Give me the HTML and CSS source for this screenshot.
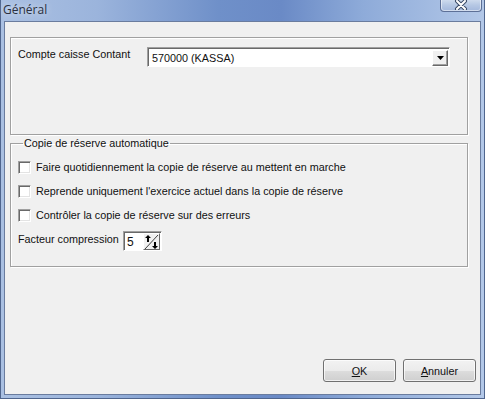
FILE: index.html
```html
<!DOCTYPE html>
<html lang="fr">
<head>
    <meta charset="UTF-8">
    <meta name="viewport" content="width=device-width, initial-scale=1.0">
    <title>Général</title>
    <link rel="stylesheet" href="styles.css">
</head>
<body>
    <section class="window">
        <header class="titlebar">
            <span class="titlebar__title">Général</span>
            <button class="titlebar__close" type="button" aria-label="Fermer">
                <svg width="14" height="10" viewBox="0 0 14 10">
                    <path d="M3 1 L11 9 M11 1 L3 9" stroke="#3a4a66" stroke-width="4" stroke-linecap="round"/>
                    <path d="M3 1 L11 9 M11 1 L3 9" stroke="#fff" stroke-width="2" stroke-linecap="round"/>
                </svg>
            </button>
        </header>

        <main class="client">
            <div class="panel">
                <div class="field">
                    <label class="field__label">Compte caisse Contant</label>
                    <div class="combo">
                        <span class="combo__value">570000 (KASSA)</span>
                        <span class="combo__button">
                            <svg width="7" height="4" viewBox="0 0 7 4"><path d="M0 0 H7 L3.5 4 Z" fill="#000"/></svg>
                        </span>
                    </div>
                </div>
            </div>

            <fieldset class="group">
                <legend class="group__legend">Copie de réserve automatique</legend>
                <label class="check"><span class="check__box"></span>Faire quotidiennement la copie de réserve au mettent en marche</label>
                <label class="check"><span class="check__box"></span>Reprende uniquement l'exercice actuel dans la copie de réserve</label>
                <label class="check"><span class="check__box"></span>Contrôler la copie de réserve sur des erreurs</label>
                <div class="compression">
                    <span class="compression__label">Facteur compression</span>
                    <div class="spin">
                        <span class="spin__value">5</span>
                        <span class="spin__button">
                            <svg width="15" height="16" viewBox="0 0 15 16">
                                <path d="M14 1 L1 15" stroke="#404040" stroke-width="1"/>
                                <path d="M4 1 L1 4 H3 V8 H5 V4 H7 Z" fill="#000"/>
                                <path d="M11 15 L8 12 H10 V8 H12 V12 H14 Z" fill="#000"/>
                            </svg>
                        </span>
                    </div>
                </div>
            </fieldset>

            <footer class="actions">
                <button class="btn" type="button"><u>O</u>K</button>
                <button class="btn" type="button"><u>A</u>nnuler</button>
            </footer>
        </main>
    </section>
</body>
</html>
```

FILE: styles.css
```css
* {
    margin: 0;
    padding: 0;
    box-sizing: border-box;
}

body {
    background-color: #f0f0f0;
    font-family: 'Liberation Sans', Arial, sans-serif;
    font-size: 10.8px;
    color: #111;
}

.window {
    width: 485px;
    height: 399px;
    display: flex;
    flex-direction: column;
    background: linear-gradient(to right, #aac0e2 0%, #9bb4dc 20%, #6f90c9 45%, #6a8ac6 58%, #8eabd9 75%, #b3c8e8 100%);
    padding: 0 3px 3px 3px;
    border-left: 1px solid #50668e;
    border-right: 1px solid #50668e;
    border-bottom: 1px solid #50668e;
}

.titlebar {
    height: 21px;
    display: flex;
    align-items: flex-start;
    justify-content: space-between;
}

.titlebar__title {
    font-family: 'Open Sans', sans-serif;
    font-size: 12px;
    color: #2a3040;
    padding-top: 1px;
    margin-left: -1px;
    text-shadow: 0 0 6px rgba(255, 255, 255, 0.7);
}

.titlebar__close {
    width: 42px;
    height: 13px;
    margin-top: -1px;
    margin-right: -1px;
    border: 1px solid #5d7097;
    border-top: none;
    border-radius: 0 0 4px 4px;
    background: linear-gradient(#d2deef, #b6c8e4 50%, #a3b8dc);
    box-shadow: inset 0 0 0 1px rgba(255, 255, 255, 0.5);
    display: flex;
    align-items: center;
    justify-content: center;
}

.client {
    flex: 1;
    display: flex;
    flex-direction: column;
    background-color: #f0f0f0;
    border: 1px solid #6a7c9e;
    padding: 15px 4px 12px 5px;
}

.panel {
    height: 98px;
    margin-right: 8px;
    border: 1px solid #a0a0a0;
    box-shadow: 1px 1px 0 #fff, inset 1px 1px 0 #fff;
    padding: 9px 17px 0 7px;
}

.field {
    display: flex;
    align-items: flex-start;
}

.field__label {
    width: 129px;
    padding-top: 1px;
}

.combo {
    flex: 1;
    height: 20px;
    display: flex;
    align-items: center;
    justify-content: space-between;
    background-color: #fff;
    border-top: 1px solid #a0a0a0;
    border-left: 1px solid #a0a0a0;
    border-right: 1px solid #fff;
    border-bottom: 1px solid #fff;
    box-shadow: inset 1px 1px 0 #696969;
    padding: 2px 1px 1px 4px;
}

.combo__button {
    width: 16px;
    height: 16px;
    display: flex;
    align-items: center;
    justify-content: center;
    background-color: #f0f0f0;
    border-top: 1px solid #fff;
    border-left: 1px solid #fff;
    border-right: 1px solid #696969;
    border-bottom: 1px solid #696969;
    box-shadow: inset -1px -1px 0 #a0a0a0;
}

.group {
    height: 130px;
    margin-top: 2px;
    margin-right: 8px;
    border: 1px solid #a0a0a0;
    box-shadow: 1px 1px 0 #fff, inset 1px 1px 0 #fff;
    padding: 6px 7px 0 7px;
    display: flex;
    flex-direction: column;
}

.group__legend {
    padding: 0 1px;
    margin-left: 5px;
}

.check {
    height: 24px;
    display: flex;
    align-items: center;
    gap: 5px;
}

.check__box {
    width: 13px;
    height: 13px;
    background-color: #fff;
    border-top: 1px solid #a0a0a0;
    border-left: 1px solid #a0a0a0;
    border-right: 1px solid #fff;
    border-bottom: 1px solid #fff;
    box-shadow: inset 1px 1px 0 #696969, inset -1px -1px 0 #e3e3e3;
}

.compression {
    display: flex;
    align-items: flex-start;
    margin-top: 4px;
}

.compression__label {
    width: 105px;
    padding-top: 2px;
}

.spin {
    width: 39px;
    height: 20px;
    display: flex;
    justify-content: space-between;
    background-color: #fff;
    border-top: 1px solid #a0a0a0;
    border-left: 1px solid #a0a0a0;
    border-right: 1px solid #fff;
    border-bottom: 1px solid #fff;
    box-shadow: inset 1px 1px 0 #696969;
    padding: 1px 1px 1px 3px;
}

.spin__value {
    padding-top: 2px;
    font-size: 12px;
}

.spin__button {
    width: 17px;
    height: 17px;
    display: flex;
    align-items: center;
    justify-content: center;
    background-color: #f0f0f0;
    border-top: 1px solid #fff;
    border-left: 1px solid #fff;
    border-right: 1px solid #696969;
    border-bottom: 1px solid #696969;
}

.actions {
    margin-top: auto;
    display: flex;
    justify-content: flex-end;
    gap: 7px;
}

.btn {
    width: 73px;
    height: 23px;
    font-family: 'Liberation Sans', Arial, sans-serif;
    font-size: 10.8px;
    color: #111;
    border: 1px solid #707070;
    border-radius: 3px;
    background: linear-gradient(#f2f2f2 0%, #ebebeb 50%, #dddddd 51%, #cfcfcf 100%);
    box-shadow: inset 0 0 0 1px rgba(255, 255, 255, 0.7);
}
```
